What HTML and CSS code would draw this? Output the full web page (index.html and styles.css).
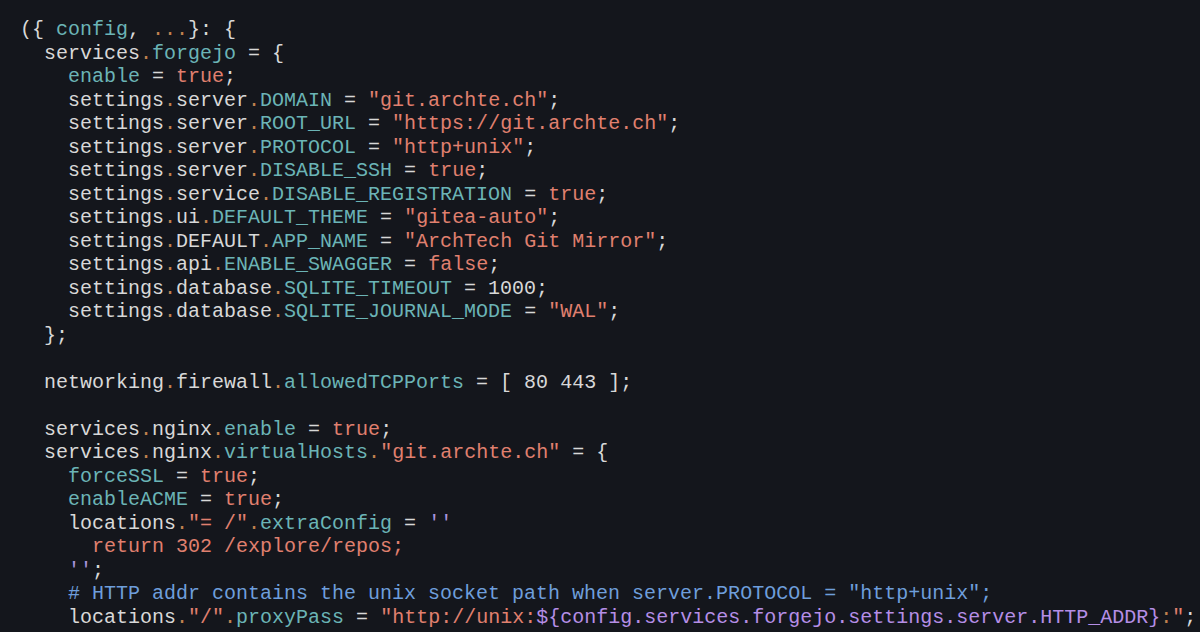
FILE: index.html
```html
<!DOCTYPE html>
<html>
<head>
<meta charset="utf-8">
<link rel="stylesheet" href="styles.css">
</head>
<body>
<pre class="code"><code class="src">({ <span class="a">config</span>, <span class="o">...</span>}: {
  services<span class="o">.</span><span class="a">forgejo</span> = {
    <span class="a">enable</span> = <span class="s">true</span>;
    settings<span class="o">.</span>server<span class="o">.</span><span class="a">DOMAIN</span> = <span class="s">"git.archte.ch"</span>;
    settings<span class="o">.</span>server<span class="o">.</span><span class="a">ROOT_URL</span> = <span class="s">"https://git.archte.ch"</span>;
    settings<span class="o">.</span>server<span class="o">.</span><span class="a">PROTOCOL</span> = <span class="s">"http+unix"</span>;
    settings<span class="o">.</span>server<span class="o">.</span><span class="a">DISABLE_SSH</span> = <span class="s">true</span>;
    settings<span class="o">.</span>service<span class="o">.</span><span class="a">DISABLE_REGISTRATION</span> = <span class="s">true</span>;
    settings<span class="o">.</span>ui<span class="o">.</span><span class="a">DEFAULT_THEME</span> = <span class="s">"gitea-auto"</span>;
    settings<span class="o">.</span>DEFAULT<span class="o">.</span><span class="a">APP_NAME</span> = <span class="s">"ArchTech Git Mirror"</span>;
    settings<span class="o">.</span>api<span class="o">.</span><span class="a">ENABLE_SWAGGER</span> = <span class="s">false</span>;
    settings<span class="o">.</span>database<span class="o">.</span><span class="a">SQLITE_TIMEOUT</span> = 1000;
    settings<span class="o">.</span>database<span class="o">.</span><span class="a">SQLITE_JOURNAL_MODE</span> = <span class="s">"WAL"</span>;
  };

  networking<span class="o">.</span>firewall<span class="o">.</span><span class="a">allowedTCPPorts</span> = [ 80 443 ];

  services<span class="o">.</span>nginx<span class="o">.</span><span class="a">enable</span> = <span class="s">true</span>;
  services<span class="o">.</span>nginx<span class="o">.</span><span class="a">virtualHosts</span><span class="o">.</span><span class="s">"git.archte.ch"</span> = {
    <span class="a">forceSSL</span> = <span class="s">true</span>;
    <span class="a">enableACME</span> = <span class="s">true</span>;
    locations<span class="o">.</span><span class="s">"= /"</span><span class="o">.</span><span class="a">extraConfig</span> = <span class="p">''</span>
      <span class="s">return 302 /explore/repos;</span>
    <span class="p">''</span>;
    <span class="c"># HTTP addr contains the unix socket path when server.PROTOCOL = "http+unix";</span>
    locations<span class="o">.</span><span class="s">"/"</span><span class="o">.</span><span class="a">proxyPass</span> = <span class="s">"http://unix:</span><span class="i">${config.services.forgejo.settings.server.HTTP_ADDR}</span><span class="o">:</span><span class="s">"</span>;</code></pre>
</body>
</html>
```

FILE: styles.css
```css
html, body {
  margin: 0;
  padding: 0;
  background: #14161c;
  height: 100%;
  overflow: hidden;
}

.code {
  margin: 0;
  padding: 18px 0 0 20px;
  font-family: "Liberation Mono", "DejaVu Sans Mono", monospace;
  font-size: 20px;
  line-height: 23.52px;
  color: #d8d8d8;
  white-space: pre;
}

.src {
  font: inherit;
}

.a { color: #6bb4b6; }
.o { color: #c0814f; }
.s { color: #e0806f; }
.p { color: #a893dc; }
.i { color: #b58ee6; }
.c { color: #6e9edb; }
```
